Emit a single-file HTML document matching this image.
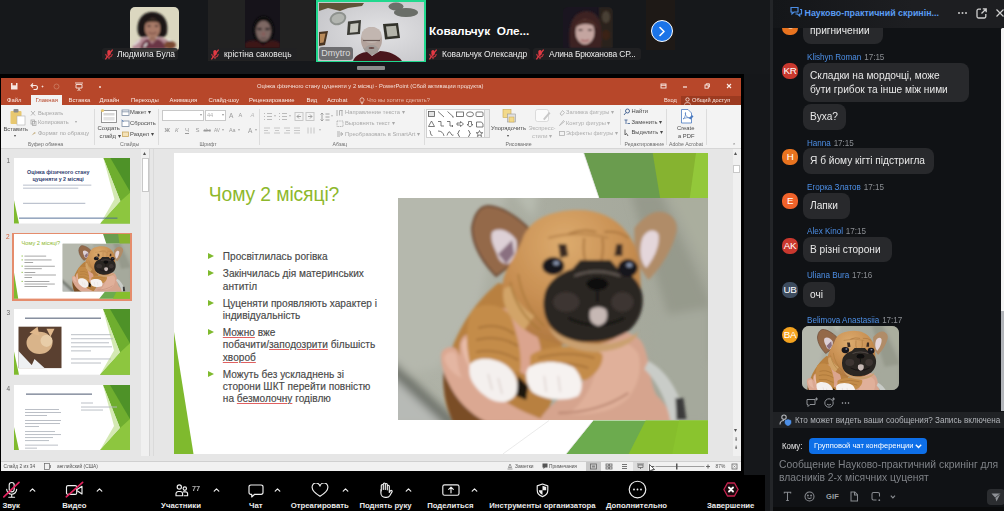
<!DOCTYPE html>
<html><head><meta charset="utf-8">
<style>
*{box-sizing:border-box;margin:0;padding:0}
html,body{width:1004px;height:511px;overflow:hidden;background:#15171a;font-family:"Liberation Sans",sans-serif;}
.a{position:absolute}
svg{display:block}
#top{left:0;top:0;width:771px;height:74px;background:#16181b}
.lbl{position:absolute;border-radius:3px;color:#ececec;white-space:nowrap;overflow:hidden}
.lbl svg{position:absolute;left:2px;top:1.5px}
#blk{left:0;top:74px;width:744px;height:437px;background:#000}
#ppt{left:1px;top:78px;width:739.5px;height:393px;background:#e6e6e6;overflow:hidden}
#bar{left:0;top:474.5px;width:765px;height:37px;background:#000}
#div{left:770px;top:0;width:3px;height:511px;background:#232528}
#chat{left:773px;top:0;width:231px;height:511px;background:#111316;overflow:hidden}
</style></head><body>
<svg width="0" height="0" style="position:absolute"><defs>
<filter id="pb" x="-5%" y="-5%" width="110%" height="110%"><feGaussianBlur stdDeviation="1.6"/></filter>
<filter id="pb2" x="-5%" y="-5%" width="110%" height="110%"><feGaussianBlur stdDeviation="4"/></filter>
<linearGradient id="pbg" x1="0" y1="0" x2="1" y2="0"><stop offset="0" stop-color="#b1b4a9"/><stop offset="0.5" stop-color="#a9aca0"/><stop offset="1" stop-color="#a3a699"/></linearGradient>
<radialGradient id="hd" cx="0.45" cy="0.25" r="0.8"><stop offset="0" stop-color="#dcab6e"/><stop offset="0.55" stop-color="#c88f52"/><stop offset="1" stop-color="#ab733c"/></radialGradient>
<g id="pup">
<rect x="-10" y="-10" width="330" height="242" fill="url(#pbg)"/>
<g filter="url(#pb2)">
<path d="M-10 -10h120l-30 120l-40 60l-60 10z" fill="#b5b8ad"/>
<path d="M232 -5l30 0l50 110v60l-40-40z" fill="#969a8c"/>
<path d="M270 -5h45v90z" fill="#aaae9e"/>
<path d="M115 -5l25 0l-5 25z" fill="#b8bcb0"/>
<path d="M-5 172l62 55h-67z" fill="#b7bab6"/>
<path d="M-5 163l66 62l-10 6l-60-56z" fill="#6c7068"/>
<path d="M250 120l60-10v115h-40z" fill="#a5a99c"/>
</g>
<g filter="url(#pb)">
<!-- body -->
<path d="M100 85c-25 20-48 55-54 95c-2 20 4 35 10 45h90l20-60l-10-70z" fill="#b8803f"/>
<path d="M46 170c-3 18 2 38 9 55h60l-30-40z" fill="#7a4e28"/>
<!-- right hand -->
<path d="M140 224c10-18 30-30 50-45l10-35c10-12 30-14 42-2c10 14 8 40 16 55c8 8 16 18 16 27z" fill="#d6a48e"/>
<path d="M200 150c14-10 32-8 40 6c4 16 0 30-10 44c-14 14-40 18-60 16c20-14 30-40 30-66z" fill="#e0b09a"/>
<path d="M160 215q40 0 70-20" stroke="#b88470" stroke-width="2" fill="none"/>
<!-- sleeve / watch -->
<path d="M250 163c16 8 32 30 38 60h-16c-4-22-14-40-26-52z" fill="#c9ccc8"/>
<path d="M277 200l8 0l3 22h-10z" fill="#3a3a3a"/>
<!-- left hand -->
<path d="M43 158c0-8 10-12 16-6l3 6c-2-14 2-22 10-22c8 0 10 8 10 18c0 16 4 30 14 40c10 10 24 18 40 24l14 6h-62c-16-8-30-22-38-40c-4-8-7-16-7-26z" fill="#dba892"/>
<path d="M64 146c2-8 12-10 15-2c2 12 0 28 6 42c-12-10-20-24-21-40z" fill="#e8bca8"/>
<path d="M46 160c2-6 8-8 12-4c2 8 2 16 6 24c-10-4-16-12-18-20z" fill="#e4b6a2"/>
<!-- thumb between legs -->
<path d="M98 112c12-6 30 4 38 20c8 14 10 32 0 44c-10 4-20-4-24-16c-8-14-16-30-14-48z" fill="#dba48e"/>
<!-- left leg -->
<path d="M74 112c14-10 36-4 40 10c6 18 10 34 8 52l-48 0c-6-20-8-44 0-62z" fill="#c48c48"/>
<path d="M80 130q20-6 36 6M78 142q22-6 42 6M78 154q22-4 42 8" stroke="#a06c34" stroke-width="1.600" fill="none"/>
<!-- right leg -->
<path d="M132 158c10-10 50-14 72-2c2 10-6 20-16 26l-56 0z" fill="#c48c48"/>
<path d="M140 160q30-8 56 0M138 168q30-6 52 2" stroke="#a06c34" stroke-width="1.500" fill="none"/>
<!-- paws -->
<path d="M120 178l10 10l-2 14l-10-4z" fill="#1a1410"/>
<path d="M72 166c8-8 24-6 34 0c10 6 16 18 12 30c-6 10-18 10-28 4c-12-8-22-20-18-34z" fill="#f4f0ee"/>
<path d="M130 170c10-8 34-8 46 0c8 8 10 20 4 28c-14 6-34 4-46-4c-6-8-8-18-4-24z" fill="#f6f2f0"/>
<path d="M90 176l4 16M100 180l4 16M146 178l2 16M160 178l2 16" stroke="#d8ccc8" stroke-width="1.200"/>
<!-- ears -->
<path d="M74 30c2-14 8-22 16-22c12 0 28 10 40 22l-8 30l-24 18c-12-12-24-30-24-48z" fill="#94694a" stroke="#6a4a36" stroke-width="2"/>
<path d="M94 34c8-6 18 0 24 8c2 10-2 20-8 24c-8 0-10-6-12-12c-4-8-6-14-4-20z" fill="#ddd0d6"/>
<path d="M100 56l14-14l2 14l-8 10z" fill="#8a7080"/>
<path d="M236 30c8-10 18-18 28-16c10 2 16 10 14 20c-4 18-16 36-28 48l-14-20z" fill="#b08c68"/>
<path d="M244 40c4-8 12-10 16-4c2 10-4 24-12 34c-6-6-8-18-4-30z" fill="#e4d6da"/>
<!-- head -->
<path d="M180 12c-28 0-50 10-56 30c-8 20-20 30-20 50c0 24 20 44 50 52c20 6 50 6 66-6c18-12 24-34 22-56c0-20-4-36-14-48c-10-14-28-22-48-22z" fill="url(#hd)"/>
<path d="M106 90c-4 14 4 30 20 42l10-14c-12-8-20-18-22-30z" fill="#d2a468"/>
<!-- wrinkles -->
<path d="M112 84q6 30 30 48M120 76q4 30 26 52" stroke="#a87838" stroke-width="1.500" fill="none"/>
<path d="M150 40q30-8 60 0" stroke="#b8844c" stroke-width="2" fill="none"/>
<path d="M186 40q-2 16 2 26M204 40q2 14-2 26M170 36q14-6 28-2M206 34q14-2 24 6" stroke="#a8743c" stroke-width="1.800" fill="none"/>
<!-- brows -->
<path d="M160 46l8 0l2 12l-8 2z" fill="#3a2a20"/><path d="M218 46l6 0l0 12l-8 0z" fill="#3a2a20"/>
<!-- muzzle -->
<path d="M146 98c2-12 12-22 28-27l8-9h30l8 9c14 4 22 14 24 26c2 14-4 28-14 36c-12 8-26 11-40 11c-16 0-30-6-38-16c-6-8-8-20-6-30z" fill="#2a2523"/>
<ellipse cx="168" cy="104" rx="13" ry="10" fill="#4c443f" opacity=".55"/><ellipse cx="224" cy="104" rx="11" ry="10" fill="#4c443f" opacity=".55"/>
<ellipse cx="199" cy="86" rx="11" ry="6.500" fill="#0c0a0a"/>
<path d="M176 78q22-9 46 0" stroke="#6a605a" stroke-width="1.800" fill="none"/>
<path d="M199 92v12M170 120q28 14 56 0" stroke="#0e0c0c" stroke-width="2" fill="none"/>
<path d="M192 112c4-4 12-4 16 0c2 8 0 14-8 16c-8-2-10-8-8-16z" fill="#c6b8b4"/>
<path d="M150 128c10 12 30 18 50 18c16 0 30-4 40-12c-4 10-16 18-40 20c-24 0-44-10-50-26z" fill="#caa070"/>
<!-- eyes -->
<ellipse cx="155" cy="68" rx="11" ry="9" fill="#15131a"/><ellipse cx="229.500" cy="70" rx="10" ry="9" fill="#15131a"/>
<ellipse cx="158" cy="65" rx="3" ry="2" fill="#8a96b0"/><ellipse cx="231" cy="67" rx="3" ry="2" fill="#8a96b0"/>
</g>
</g>
</defs></svg>

<div id="top" class="a">

<style>
.lbl{height:12.5px;line-height:12.5px;font-size:8.9px;padding-left:15.5px;background:rgba(34,34,36,.86)}
.lbl span{display:inline-block;transform:scaleX(.95);transform-origin:0 0}
</style>
<svg class="a" style="left:130px;top:6.5px;border-radius:5px" width="49" height="45" viewBox="0 0 49 45"><defs><filter id="b1"><feGaussianBlur stdDeviation="0.8"/></filter></defs>
<rect width="49" height="45" fill="#dbd7c0"/>
<g filter="url(#b1)">
<path d="M8 26c-2-12 4-21 14-21c11 0 17 8 15 21c-1 4-4 5-6 4l-17 0c-3 1-5-1-6-4z" fill="#1b1715"/>
<ellipse cx="22.500" cy="21.500" rx="7.800" ry="10" fill="#a87a68"/>
<path d="M14 17c2-6 14-7 17 0c-4-3-12-3-17 0z" fill="#2a201c"/>
<ellipse cx="19" cy="19" rx="1.800" ry="0.900" fill="#4a3430"/><ellipse cx="26.500" cy="19" rx="1.800" ry="0.900" fill="#4a3430"/>
<path d="M18.500 25.500q4 2.500 8 0" stroke="#6a3a34" stroke-width="1" fill="none"/>
<path d="M2 42c2-8 8-11 14-12l6 3l7-3c6 1 12 4 16 12z" fill="#b48a94"/>
<path d="M10 42c1-5 4-9 8-10l4 5l5-5c5 1 8 5 9 10z" fill="#6a3444"/>
<path d="M4 38l6-5M38 32l6 5M14 40l3-4" stroke="#eee" stroke-width="1.500"/>
<ellipse cx="40" cy="38" rx="6" ry="4" fill="#7a4a30"/>
<ellipse cx="22.500" cy="32" rx="3.500" ry="2.500" fill="#9a6e5e"/>
</g></svg>
<div class="lbl" style="left:101.5px;top:47.5px;width:76.5px"><svg width="10" height="11" viewBox="0 0 9 10" fill="none"><rect x="3" y="0.8" width="3" height="5.2" rx="1.5" fill="#e23a44"/><path d="M1.5 4.500a3 3 0 0 0 6 0M4.500 7.500v1.700" stroke="#e23a44" stroke-width="0.9"/><path d="M7.800 0.600l-6.600 8.800" stroke="#e23a44" stroke-width="1.1"/></svg><span>Людмила Була</span></div>
<div class="a" style="left:208px;top:0;width:107px;height:61px;background:#222222"></div>
<svg class="a" style="left:245px;top:0" width="35" height="48" viewBox="0 0 35 48"><defs><filter id="b2"><feGaussianBlur stdDeviation="1"/></filter></defs>
<rect width="35" height="48" fill="#16131a"/>
<g filter="url(#b2)">
<ellipse cx="18.500" cy="30" rx="10.500" ry="14" fill="#0c0a0e"/>
<ellipse cx="18.500" cy="31" rx="7.600" ry="10.500" fill="#7d6863"/>
<ellipse cx="14.500" cy="29" rx="2.600" ry="1.300" fill="#2c2426"/><ellipse cx="22.500" cy="29" rx="2.600" ry="1.300" fill="#2c2426"/>
<ellipse cx="18.500" cy="34" rx="1.500" ry="2" fill="#8a5a58"/>
<path d="M15.500 38.500h6" stroke="#4a3434" stroke-width="1"/>
<path d="M0 48v-5c4-3 9-3 12-2l6 4l7-4c4-1 7 0 10 2v5z" fill="#3c1218"/>
</g></svg>
<div class="lbl" style="left:208.0px;top:47.5px;width:88.5px"><svg width="10" height="11" viewBox="0 0 9 10" fill="none"><rect x="3" y="0.8" width="3" height="5.2" rx="1.5" fill="#e23a44"/><path d="M1.5 4.500a3 3 0 0 0 6 0M4.500 7.500v1.700" stroke="#e23a44" stroke-width="0.9"/><path d="M7.800 0.600l-6.600 8.800" stroke="#e23a44" stroke-width="1.1"/></svg><span>крістіна саковець</span></div>
<div class="a" style="left:316px;top:0;width:109.500px;height:62px;background:#20d88e"></div>
<svg class="a" style="left:317.500px;top:1.500px" width="106.500" height="59" viewBox="0 0 106.500 59"><defs><filter id="b3"><feGaussianBlur stdDeviation="0.700"/></filter><radialGradient id="wg" cx="0.600" cy="0.500" r="0.700"><stop offset="0" stop-color="#e2e2e4"/><stop offset="1" stop-color="#c6c6ca"/></radialGradient></defs>
<rect width="106.500" height="59" fill="url(#wg)"/>
<g filter="url(#b3)">
<path d="M1 1h45l-2 3l-14 2l-8 3l-12-3l-9 3z" fill="#5e5238"/>
<ellipse cx="20" cy="16.500" rx="8.500" ry="6.500" fill="#8e928e" transform="rotate(-18 20 16.500)"/>
<ellipse cx="20" cy="16.500" rx="6.500" ry="4.600" fill="#b2b5b0" transform="rotate(-18 20 16.500)"/>
<ellipse cx="78" cy="4.500" rx="7.500" ry="4" fill="#6c706a"/>
<ellipse cx="88" cy="10.500" rx="12" ry="4.500" fill="#6a6e68"/>
<path d="M30 19.500l13-1.500l-1 14l-13 1z" fill="#3a3a34"/><path d="M32.500 22l8-1l-0.700 9l-8 0.700z" fill="#c8c8c0"/>
<path d="M65 22l15-1l2 15l-15 1.500z" fill="#30302a"/><path d="M68 24.500l10-0.700l1.500 10l-10 1z" fill="#b4b4aa"/>
<path d="M1 30l9-1l-3 14l-6 1z" fill="#4a3420"/><path d="M2 32l5.500-0.500l-2 9l-3.500 0.500z" fill="#b88a5a"/>
<ellipse cx="53.500" cy="38" rx="10.500" ry="13" fill="#b3a39c"/>
<ellipse cx="53.500" cy="33" rx="10" ry="8" fill="#c2b6b0"/>
<path d="M45 45c2 8 14 8 17 0c-2 4-14 5-17 0z" fill="#9a9692"/>
<ellipse cx="53.500" cy="48" rx="7" ry="5" fill="#a29c98"/>
<path d="M45 38.500h17" stroke="#6a5a56" stroke-width="1.200"/>
<ellipse cx="53.500" cy="46" rx="3" ry="1" fill="#6a4a46"/>
<path d="M35 59c2-6 10-9 14-9l5 4l8-5c8 0 18 4 22 10z" fill="#48181e"/>
</g></svg>
<div class="a" style="left:319px;top:46.500px;width:33.500px;height:13px;border-radius:3px;background:rgba(96,96,98,.88);color:#dcdcdc;font-size:9px;line-height:13px;text-align:center">Dmytro</div>
<div class="a" style="left:357px;top:66px;width:28px;height:4px;border-radius:1px;background:#8c8c8c"></div>
<div class="a" style="left:429px;top:24px;font-size:11.8px;line-height:15px;font-weight:bold;color:#fff;white-space:pre">Ковальчук  Оле...</div>
<div class="lbl" style="left:426.0px;top:47.5px;width:103.5px"><svg width="10" height="11" viewBox="0 0 9 10" fill="none"><rect x="3" y="0.8" width="3" height="5.2" rx="1.5" fill="#e23a44"/><path d="M1.5 4.500a3 3 0 0 0 6 0M4.500 7.500v1.700" stroke="#e23a44" stroke-width="0.9"/><path d="M7.800 0.600l-6.600 8.800" stroke="#e23a44" stroke-width="1.1"/></svg><span>Ковальчук Олександр</span></div>
<svg class="a" style="left:563px;top:7px;border-radius:5px" width="49.500" height="44" viewBox="0 0 49.500 44"><defs><filter id="b4"><feGaussianBlur stdDeviation="0.900"/></filter></defs>
<rect width="49.500" height="44" fill="#1a1520"/>
<g filter="url(#b4)">
<rect x="36" y="0" width="14" height="41" fill="#2a221c"/>
<ellipse cx="43" cy="10" rx="4" ry="6" fill="#4a4034"/><ellipse cx="43" cy="28" rx="4" ry="5" fill="#3a2018"/>
<path d="M7 41c-2-16-1-36 16-37c15 0 17 18 15 37z" fill="#3e2424"/>
<ellipse cx="22" cy="25" rx="9.500" ry="12.500" fill="#c4a5a0"/>
<path d="M11 22c0-12 22-14 24 0c-6-6-18-7-24 0z" fill="#4a2a26"/>
<ellipse cx="17.500" cy="23" rx="2.300" ry="1.100" fill="#4a3838"/><ellipse cx="27" cy="23" rx="2.300" ry="1.100" fill="#4a3838"/>
<path d="M18 33q4 2 8 0" stroke="#a05a5e" stroke-width="1.600" fill="none"/>
</g></svg>
<div class="lbl" style="left:533.0px;top:47.5px;width:107.5px"><svg width="10" height="11" viewBox="0 0 9 10" fill="none"><rect x="3" y="0.8" width="3" height="5.2" rx="1.5" fill="#e23a44"/><path d="M1.5 4.500a3 3 0 0 0 6 0M4.500 7.500v1.700" stroke="#e23a44" stroke-width="0.9"/><path d="M7.800 0.600l-6.600 8.800" stroke="#e23a44" stroke-width="1.1"/></svg><span style="letter-spacing:-0.18px">Алина Брюханова СР...</span></div>
<div class="a" style="left:645.5px;top:0;width:29px;height:50px;background:#1e1916"></div>
<div class="a" style="left:650.5px;top:20px;width:22px;height:22px;border-radius:11px;background:#1b74e8;border:1.300px solid #fff"></div>
<svg class="a" style="left:657.500px;top:25.500px" width="8" height="11" viewBox="0 0 8 11" fill="none" stroke="#fff" stroke-width="1.6" stroke-linecap="round" stroke-linejoin="round"><path d="M2 1.500l4 4l-4 4"/></svg>

</div>
<div id="blk" class="a"></div>
<div id="bar" class="a">
<style>#bar .l{position:absolute;top:26.900px;font-size:7.750px;font-weight:bold;color:#ebebeb;line-height:10px;white-space:nowrap;transform:translateX(-50%)}#bar svg{position:absolute;fill:none;stroke:#f0f0f0;stroke-width:1.150;stroke-linecap:round;stroke-linejoin:round}</style>
<div class="l" style="left:11.2px">Звук</div>
<div class="l" style="left:74.3px">Видео</div>
<div class="l" style="left:181px">Участники</div>
<div class="l" style="left:255.8px">Чат</div>
<div class="l" style="left:319.8px">Отреагировать</div>
<div class="l" style="left:385.5px">Поднять руку</div>
<div class="l" style="left:450.4px">Поделиться</div>
<div class="l" style="left:542.4px">Инструменты организатора</div>
<div class="l" style="left:636.5px">Дополнительно</div>
<div class="l" style="left:730.7px">Завершение</div>
<svg style="left:28.9px;top:13.0px" width="7" height="4" viewBox="0 0 7 4"><path d="M1.200 3.200l2.300-2.300l2.300 2.300" stroke-width="1.150"/></svg>
<svg style="left:95.6px;top:13.0px" width="7" height="4" viewBox="0 0 7 4"><path d="M1.200 3.200l2.300-2.300l2.300 2.300" stroke-width="1.150"/></svg>
<svg style="left:212.8px;top:13.0px" width="7" height="4" viewBox="0 0 7 4"><path d="M1.200 3.200l2.300-2.300l2.300 2.300" stroke-width="1.150"/></svg>
<svg style="left:273.8px;top:13.0px" width="7" height="4" viewBox="0 0 7 4"><path d="M1.200 3.200l2.300-2.300l2.300 2.300" stroke-width="1.150"/></svg>
<svg style="left:341.5px;top:13.0px" width="7" height="4" viewBox="0 0 7 4"><path d="M1.200 3.200l2.300-2.300l2.300 2.300" stroke-width="1.150"/></svg>
<svg style="left:404.9px;top:13.0px" width="7" height="4" viewBox="0 0 7 4"><path d="M1.200 3.200l2.300-2.300l2.300 2.300" stroke-width="1.150"/></svg>
<svg style="left:471.4px;top:13.0px" width="7" height="4" viewBox="0 0 7 4"><path d="M1.200 3.200l2.300-2.300l2.300 2.300" stroke-width="1.150"/></svg>
<svg style="left:3px;top:6.5px" width="17" height="17" viewBox="0 0 17 17"><rect x="6.200" y="1.500" width="5" height="9.300" rx="2.500"/><path d="M3.700 8.200a5 5 0 0 0 10 0M8.700 13.300v2.800M5.800 16.200h5.800"/><path d="M0.800 15.800l15.200-14.500" stroke="#e3245f" stroke-width="1.700"/></svg>
<svg style="left:65px;top:6.5px" width="19" height="17" viewBox="0 0 19 17"><rect x="1.500" y="4.600" width="10.200" height="8.800" rx="1.500"/><path d="M12.500 8.300l4.500-3v7.600l-4.500-3"/><path d="M1.300 15.800l16.300-14.500" stroke="#e3245f" stroke-width="1.700"/></svg>
<svg style="left:174.500px;top:9.5px" width="14" height="13" viewBox="0 0 14 13"><circle cx="4.300" cy="3" r="2.100"/><path d="M1 11.700v-2a2.200 2.200 0 0 1 2.200-2.200h2.200a2.200 2.200 0 0 1 2.200 2.200v2z"/><circle cx="9.800" cy="4.600" r="1.700"/><path d="M8.300 7.800h2.300a2 2 0 0 1 2 2v1.900h-3.500"/></svg>
<div style="position:absolute;left:192.300px;top:9.5px;font-size:8px;line-height:10px;color:#b4b4b4;font-weight:bold;transform:scaleX(.92);transform-origin:0 0">77</div>
<svg style="left:247.500px;top:9.0px" width="16" height="14" viewBox="0 0 16 14"><path d="M2.800 1h10.400a1.800 1.800 0 0 1 1.800 1.800v5.700a1.800 1.800 0 0 1-1.800 1.800h-6.500l-3 2.700v-2.700h-0.900a1.800 1.800 0 0 1-1.800-1.800v-5.700a1.800 1.800 0 0 1 1.800-1.800z"/></svg>
<svg style="left:311px;top:8.5px" width="18" height="14.500" viewBox="0 0 18 14.500"><path d="M9 13.300c-4-2.600-7.800-5.600-7.800-8.600a3.700 3.700 0 0 1 7.800-1.500a3.700 3.700 0 0 1 7.800 1.500c0 3-3.800 6-7.800 8.600z"/></svg>
<svg style="left:377.500px;top:7.5px" width="15" height="16" viewBox="0 0 15 16"><path d="M3.300 9v-5.500a1 1 0 0 1 2 0v4M5.300 7.500v-5.500a1 1 0 0 1 2 0v5.500M7.300 7.500v-5a1 1 0 0 1 2 0v5M9.300 7.800v-3.600a1 1 0 0 1 2 0v6.200l1.200-1.800a1 1 0 0 1 1.600 1l-2.200 3.900a4 4 0 0 1-3.500 1.900h-1.200a4.300 4.300 0 0 1-4.300-4.300v-3.500"/></svg>
<svg style="left:441.500px;top:9.5px" width="18" height="12" viewBox="0 0 18 12"><rect x="0.800" y="0.800" width="16.200" height="10.400" rx="1.800"/><path d="M9 8.800v-5.300M6.700 5.400l2.300-2.300l2.300 2.300"/></svg>
<svg style="left:535.500px;top:8.5px" width="13" height="14.500" viewBox="0 0 13 14.500"><path d="M6.500 1l5.300 1.900v4.300c0 3-2.300 5.300-5.300 6.400c-3-1.100-5.300-3.400-5.300-6.400v-4.300z"/><path d="M6.500 2.800v4.500h3.700v-3.200zM6.500 7.300v4.600c-2-0.900-3.500-2.400-3.700-4.600z" fill="#f0f0f0" stroke="none"/></svg>
<svg style="left:627.500px;top:5.699999999999989px" width="19" height="19" viewBox="0 0 19 19"><circle cx="9.500" cy="9.500" r="8.300"/><circle cx="6" cy="9.500" r="0.900" fill="#f0f0f0" stroke="none"/><circle cx="9.500" cy="9.500" r="0.900" fill="#f0f0f0" stroke="none"/><circle cx="13" cy="9.500" r="0.900" fill="#f0f0f0" stroke="none"/></svg>
<svg style="left:722.500px;top:7.699999999999989px" width="16" height="15" viewBox="0 0 16 15"><path d="M4.500 1h7l3.600 6.500l-3.600 6.500h-7l-3.600-6.500z" stroke="#c8224f" stroke-width="1.300" fill="#1a0a0e"/><path d="M6 5.500l4 4M10 5.500l-4 4" stroke="#fff" stroke-width="1.900"/></svg>
</div>
<div id="ppt" class="a">
<style>
#ppt .t{white-space:nowrap}
#ppt .bl{filter:blur(.35px)}
</style>
<div class="a" style="left:0.00px;top:0.00px;width:740.00px;height:28.00px;background:#b7472a"></div>
<svg class="a bl" style="left:9px;top:3px" width="100" height="11" viewBox="0 0 100 11" fill="none" stroke="#f6e6e0" stroke-width="1"><rect x="1" y="2" width="6.5" height="6.500" fill="#f6e6e0" stroke="none"/><rect x="2.500" y="2" width="3.500" height="2.300" fill="#b7472a" stroke="none"/><path d="M21 4.500h4.500a2 2 0 0 1 0 4h-2M23 2.500l-2 2l2 2" stroke-width="1.100"/><circle cx="32.500" cy="5.500" r="0.500" fill="#f6e6e0"/><circle cx="46.500" cy="5.500" r="2.500" stroke="#c9765c"/><path d="M65 2h8M66 3.500h6v3.500h-6zM69 7v2M67.500 10l1.500-1.500l1.500 1.500" stroke-width="0.900"/><circle cx="90" cy="6" r="0.600" fill="#f6e6e0"/></svg>
<div class="a t bl" style="left:256.00px;top:4.70px;font-size:6.0px;line-height:7.20px;color:#f5e3dc;transform:scaleX(.97);transform-origin:0 0">Оцінка фізичного стану цуценяти у 2 місяці - PowerPoint (Сбой активации продукта)</div>
<svg class="a bl" style="left:659px;top:3px" width="76" height="10" viewBox="0 0 76 10" fill="none" stroke="#fbeee9" stroke-width="0.900"><rect x="1" y="3" width="5" height="4"/><path d="M1 4.300h5"/><path d="M23 6h4" stroke-width="1.200"/><rect x="45" y="4" width="3.200" height="3.200"/><path d="M46.200 4v-1.200h3.200v3.200h-1.200"/><path d="M67 3l4 4M71 3l-4 4" stroke-width="1.100"/></svg>
<div class="a" style="left:29.50px;top:16.80px;width:31.50px;height:11.00px;background:#f3f3f3"></div>
<div class="a t bl" style="left:34.50px;top:19.06px;font-size:5.9px;line-height:7.08px;color:#b7472a;">Главная</div>
<div class="a t bl" style="left:6.00px;top:19.06px;font-size:5.9px;line-height:7.08px;color:#fbeae4;">Файл</div>
<div class="a t bl" style="left:67.50px;top:19.06px;font-size:5.9px;line-height:7.08px;color:#fbeae4;">Вставка</div>
<div class="a t bl" style="left:98.50px;top:19.06px;font-size:5.9px;line-height:7.08px;color:#fbeae4;">Дизайн</div>
<div class="a t bl" style="left:130.00px;top:19.06px;font-size:5.9px;line-height:7.08px;color:#fbeae4;">Переходы</div>
<div class="a t bl" style="left:168.50px;top:19.06px;font-size:5.9px;line-height:7.08px;color:#fbeae4;">Анимация</div>
<div class="a t bl" style="left:207.50px;top:19.06px;font-size:5.9px;line-height:7.08px;color:#fbeae4;">Слайд-шоу</div>
<div class="a t bl" style="left:248.00px;top:19.06px;font-size:5.9px;line-height:7.08px;color:#fbeae4;">Рецензирование</div>
<div class="a t bl" style="left:305.50px;top:19.06px;font-size:5.9px;line-height:7.08px;color:#fbeae4;">Вид</div>
<div class="a t bl" style="left:326.00px;top:19.06px;font-size:5.9px;line-height:7.08px;color:#fbeae4;">Acrobat</div>
<svg class="a" style="left:358px;top:18.5px" width="6" height="8" viewBox="0 0 6 8" fill="none" stroke="#f3d5cb" stroke-width="0.800"><path d="M3 0.800a2 2 0 0 1 1.200 3.600v1h-2.400v-1a2 2 0 0 1 1.200-3.600zM2 6.700h2"/></svg>
<div class="a t bl" style="left:366.00px;top:19.18px;font-size:5.7px;line-height:6.84px;color:#e9b9a9;">Что вы хотите сделать?</div>
<div class="a t bl" style="left:663.00px;top:19.18px;font-size:5.7px;line-height:6.84px;color:#fbeae4;">Вход</div>
<div class="a" style="left:680.00px;top:17.50px;width:60.00px;height:10.50px;background:#9c3a20"></div>
<svg class="a" style="left:683px;top:19px" width="7" height="8" viewBox="0 0 7 8" fill="none" stroke="#fbeae4" stroke-width="0.800"><circle cx="3.500" cy="2.500" r="1.700"/><path d="M0.500 7.500c0-2.500 6-2.500 6 0"/></svg>
<div class="a t bl" style="left:691.00px;top:19.18px;font-size:5.7px;line-height:6.84px;color:#fbeae4;">Общий доступ</div>
<div class="a" style="left:0.00px;top:27.40px;width:740.00px;height:42.60px;background:#f3f3f3"></div>
<div class="a" style="left:0.00px;top:69.50px;width:740.00px;height:0.80px;background:#d6d6d6"></div>
<div class="a" style="left:93.00px;top:31.00px;width:0.60px;height:36.00px;background:#dcdcdc"></div>
<div class="a" style="left:157.00px;top:31.00px;width:0.60px;height:36.00px;background:#dcdcdc"></div>
<div class="a" style="left:258.00px;top:31.00px;width:0.60px;height:36.00px;background:#dcdcdc"></div>
<div class="a" style="left:423.00px;top:31.00px;width:0.60px;height:36.00px;background:#dcdcdc"></div>
<div class="a" style="left:619.00px;top:31.00px;width:0.60px;height:36.00px;background:#dcdcdc"></div>
<div class="a" style="left:665.00px;top:31.00px;width:0.60px;height:36.00px;background:#dcdcdc"></div>
<div class="a" style="left:705.00px;top:31.00px;width:0.60px;height:36.00px;background:#dcdcdc"></div>
<div class="a t bl" style="left:27.00px;top:63.48px;font-size:5.2px;line-height:6.24px;color:#6e6e6e;">Буфер обмена</div>
<div class="a t bl" style="left:119.00px;top:63.48px;font-size:5.2px;line-height:6.24px;color:#6e6e6e;">Слайды</div>
<div class="a t bl" style="left:198.50px;top:63.48px;font-size:5.2px;line-height:6.24px;color:#6e6e6e;">Шрифт</div>
<div class="a t bl" style="left:331.50px;top:63.48px;font-size:5.2px;line-height:6.24px;color:#6e6e6e;">Абзац</div>
<div class="a t bl" style="left:504.50px;top:63.48px;font-size:5.2px;line-height:6.24px;color:#6e6e6e;">Рисование</div>
<div class="a t bl" style="left:623.50px;top:63.48px;font-size:5.2px;line-height:6.24px;color:#6e6e6e;">Редактирование</div>
<div class="a t bl" style="left:668.00px;top:63.48px;font-size:5.2px;line-height:6.24px;color:#6e6e6e;">Adobe Acrobat</div>
<svg class="a bl" style="left:8px;top:29.5px" width="18" height="18" viewBox="0 0 18 18"><rect x="1.500" y="3" width="11" height="13" rx="1" fill="#e8c870"/><rect x="4.500" y="1" width="5" height="3.500" rx="1" fill="#8a8a8a"/><rect x="8" y="8" width="8" height="9" fill="#fff" stroke="#b0b0b0" stroke-width="0.600"/></svg>
<div class="a t bl" style="left:2.50px;top:47.52px;font-size:5.8px;line-height:6.96px;color:#4a4a4a;">Вставить</div>
<div class="a t bl" style="left:12.50px;top:55.60px;font-size:4px;line-height:4.80px;color:#4a4a4a;">▾</div>
<div class="a t bl" style="left:37.00px;top:31.58px;font-size:5.7px;line-height:6.84px;color:#a6a6a6;">Вырезать</div>
<div class="a t bl" style="left:37.00px;top:41.08px;font-size:5.7px;line-height:6.84px;color:#a6a6a6;">Копировать</div>
<div class="a t bl" style="left:37.00px;top:51.58px;font-size:5.7px;line-height:6.84px;color:#a6a6a6;">Формат по образцу</div>
<svg class="a bl" style="left:29px;top:32px" width="7" height="27" viewBox="0 0 7 27" fill="none" stroke="#a8a8a8" stroke-width="0.800"><path d="M1 1l4 4.500M5 1l-4 4.500"/><rect x="1" y="10" width="3.500" height="4"/><rect x="2.500" y="11.500" width="3.500" height="4"/><path d="M1.500 25.500l3-3.500l1.500 1z" fill="#c9b48a" stroke="none"/></svg>
<div class="a t bl" style="left:74.00px;top:42.10px;font-size:4px;line-height:4.80px;color:#a6a6a6;">▾</div>
<svg class="a bl" style="left:99px;top:29.5px" width="18" height="17" viewBox="0 0 18 17"><rect x="1.500" y="2.500" width="15" height="12" fill="#fff" stroke="#8a8a8a" stroke-width="0.900"/><rect x="3.500" y="5" width="11" height="2.500" fill="#d8d8d8"/><rect x="3.500" y="9" width="11" height="3.500" fill="#e4e4e4"/><circle cx="2.500" cy="2.500" r="1.600" fill="#e8c870"/></svg>
<div class="a t bl" style="left:96.50px;top:46.96px;font-size:5.9px;line-height:7.08px;color:#4a4a4a;">Создать</div>
<div class="a t bl" style="left:98.50px;top:54.96px;font-size:5.9px;line-height:7.08px;color:#4a4a4a;">слайд ▾</div>
<div class="a t bl" style="left:129.00px;top:31.02px;font-size:5.8px;line-height:6.96px;color:#4a4a4a;">Макет ▾</div>
<div class="a t bl" style="left:129.00px;top:42.02px;font-size:5.8px;line-height:6.96px;color:#4a4a4a;">Сбросить</div>
<div class="a t bl" style="left:129.00px;top:52.52px;font-size:5.8px;line-height:6.96px;color:#4a4a4a;">Раздел ▾</div>
<svg class="a bl" style="left:120px;top:31px" width="9" height="29" viewBox="0 0 9 29" fill="none" stroke="#7a8aa0" stroke-width="0.800"><rect x="1" y="1" width="7" height="5.500" fill="#fff"/><path d="M1 2.800h7"/><rect x="1" y="12" width="7" height="5.500" fill="#fff"/><path d="M0.500 11l2 1.500" stroke="#3a6ab0"/><rect x="1.500" y="23" width="6" height="4.500" fill="#f4e2b8" stroke="#c9a860"/></svg>
<div class="a" style="left:161.00px;top:32.00px;width:42.00px;height:10.50px;background:#fff;border:0.600px solid #c8c8c8"></div>
<div class="a" style="left:204.00px;top:32.00px;width:21.00px;height:10.50px;background:#fff;border:0.600px solid #c8c8c8"></div>
<div class="a t bl" style="left:206.00px;top:33.94px;font-size:5.6px;line-height:6.72px;color:#b0b0b0;">44</div>
<div class="a t bl" style="left:198.50px;top:35.02px;font-size:3.8px;line-height:4.56px;color:#999;">▾</div>
<div class="a t bl" style="left:220.50px;top:35.02px;font-size:3.8px;line-height:4.56px;color:#999;">▾</div>
<div class="a t bl" style="left:228.00px;top:33.60px;font-size:6.5px;line-height:7.80px;color:#9a9a9a;">A</div>
<div class="a t bl" style="left:237.50px;top:34.34px;font-size:5.6px;line-height:6.72px;color:#9a9a9a;">A</div>
<div class="a t bl" style="left:249.50px;top:33.90px;font-size:6px;line-height:7.20px;color:#b8b8b8;font-style:italic">A</div>
<div class="a t bl" style="left:163.50px;top:48.90px;font-size:6px;line-height:7.20px;color:#9a9a9a;font-weight:bold">Ж</div>
<div class="a t bl" style="left:174.00px;top:48.90px;font-size:6px;line-height:7.20px;color:#9a9a9a;font-style:italic">К</div>
<div class="a t bl" style="left:184.00px;top:48.90px;font-size:6px;line-height:7.20px;color:#9a9a9a;text-decoration:underline">Ч</div>
<div class="a t bl" style="left:194.50px;top:48.90px;font-size:6px;line-height:7.20px;color:#9a9a9a;">S</div>
<div class="a t bl" style="left:202.50px;top:48.90px;font-size:6px;line-height:7.20px;color:#9a9a9a;font-size:4.500px;text-decoration:line-through">abc</div>
<div class="a t bl" style="left:213.00px;top:48.90px;font-size:6px;line-height:7.20px;color:#9a9a9a;font-size:4.700px">AV</div>
<div class="a t bl" style="left:228.00px;top:48.90px;font-size:6px;line-height:7.20px;color:#9a9a9a;font-size:5.400px">Aa</div>
<div class="a t bl" style="left:247.00px;top:48.90px;font-size:6px;line-height:7.20px;color:#9a9a9a;font-size:6.500px">A</div>
<div class="a t bl" style="left:220.50px;top:50.22px;font-size:3.8px;line-height:4.56px;color:#aaa;">▾</div>
<div class="a t bl" style="left:236.50px;top:50.22px;font-size:3.8px;line-height:4.56px;color:#aaa;">▾</div>
<div class="a t bl" style="left:254.00px;top:50.22px;font-size:3.8px;line-height:4.56px;color:#aaa;">▾</div>
<svg class="a bl" style="left:261px;top:32px" width="72" height="28" viewBox="0 0 72 28" fill="none" stroke="#b4b4b4" stroke-width="0.900"><path d="M2 3.500h1M2 6.500h1M2 9.500h1M5 3.500h5M5 6.500h5M5 9.500h5"/><path d="M17 3.500h1M17 6.500h1M17 9.500h1M20 3.500h5M20 6.500h5M20 9.500h5"/><rect x="33" y="2.500" width="8" height="8" stroke="#c4c4c4"/><path d="M35 6.500h4M37 4.500l-2 2l2 2" stroke="#9a9a9a"/><rect x="44" y="2.500" width="8" height="8" stroke="#c4c4c4"/><path d="M46 6.500h4M48 4.500l2 2l-2 2" stroke="#9a9a9a"/><path d="M60 3v8M58.500 4.500l1.500-1.500l1.500 1.500M58.500 9.500l1.500 1.500l1.500-1.500M63.500 4h4M63.500 7h4M63.500 10h4" stroke="#9a9a9a"/><path d="M2 18h6M2 20.500h4M2 23h6M12 18h6M13 20.500h4M12 23h6M22 18h6M24 20.500h4M22 23h6M32 18h6M32 20.500h6M32 23h6" stroke="#c2c2c2"/><path d="M46 17.500v6M49 17.500v6M52 17.500v6" stroke="#c2c2c2"/></svg>
<div class="a t bl" style="left:273.00px;top:36.22px;font-size:3.8px;line-height:4.56px;color:#bbb;">▾</div>
<div class="a t bl" style="left:288.00px;top:36.22px;font-size:3.8px;line-height:4.56px;color:#bbb;">▾</div>
<div class="a t bl" style="left:330.00px;top:36.22px;font-size:3.8px;line-height:4.56px;color:#bbb;">▾</div>
<div class="a t bl" style="left:318.00px;top:50.22px;font-size:3.8px;line-height:4.56px;color:#bbb;">▾</div>
<div class="a t bl" style="left:344.00px;top:30.52px;font-size:5.8px;line-height:6.96px;color:#a8a8a8;">Направление текста ▾</div>
<div class="a t bl" style="left:344.00px;top:41.52px;font-size:5.8px;line-height:6.96px;color:#a8a8a8;">Выровнять текст ▾</div>
<div class="a t bl" style="left:344.00px;top:52.52px;font-size:5.8px;line-height:6.96px;color:#a8a8a8;">Преобразовать в SmartArt ▾</div>
<svg class="a bl" style="left:335px;top:30.5px" width="8" height="29" viewBox="0 0 8 29" fill="none" stroke="#a0a0a0" stroke-width="0.800"><path d="M1 1v6M3.500 1.500v5M6 1v6M3.500 1.500h3"/><rect x="1" y="12" width="6" height="5.500" stroke-dasharray="1 0.700"/><path d="M1 23h3M1 25h3M1 27h3M5 23.500l2 1.500l-2 1.500z"/></svg>
<div class="a" style="left:425.00px;top:31.00px;width:63.50px;height:28.50px;background:#fff;border:0.600px solid #cfcfcf"></div>
<div class="a" style="left:483.00px;top:31.00px;width:5.50px;height:28.50px;background:#ececec;border:0.600px solid #cfcfcf"></div>
<svg class="a bl" style="left:426px;top:31.5px" width="57" height="28" viewBox="0 0 57 28" fill="none" stroke="#5a5a5a" stroke-width="0.800"><rect x="1.500" y="1.500" width="6" height="5" fill="#e4e4e4"/><path d="M11 1.500l6 5.500M20.500 1.500l6 5.500M26.500 7l-1.500-0.300"/><rect x="29.500" y="2" width="7" height="4.500"/><ellipse cx="43" cy="4.300" rx="3.500" ry="2.400"/><rect x="49" y="2" width="7" height="4.500" rx="1"/><path d="M1.500 16.500l3-5.500l3 5.500z"/><path d="M11 11.500h3v4.500h3M20 11.500h3v4.500h3M26 16l-1-1M26 16l-1 1"/><path d="M30 13h3.500v-1.500l3 2.500l-3 2.500v-1.500h-3.500z"/><path d="M41.500 11.500v3h-1.500l3 2.500l3-2.500h-1.500v-3z"/><path d="M49.500 12h5l1.500 2v3h-6.500z"/><path d="M2.500 20.500q1 0 1 2.500t2 2.500M11 21q5 0 6 5M20 25.500q2-6 3.500-2.500t3 2M33 20.500q-1.500 0-1.500 1.500t-1 1.500q1 0 1 1.500t1.500 1.500M41 20.500q1.500 0 1.500 1.500t1 1.500q-1 0-1 1.500t-1.500 1.500"/><path d="M52.500 20.500l1 2.200h2.300l-1.900 1.500l0.700 2.300l-2.100-1.400l-2.100 1.400l0.700-2.300l-1.900-1.500h2.300z"/></svg>
<svg class="a bl" style="left:500px;top:29.5px" width="17" height="17" viewBox="0 0 17 17"><rect x="2" y="1.500" width="8" height="8" fill="#f2d98a" stroke="#c9a850" stroke-width="0.600"/><rect x="6.500" y="6" width="8" height="8" fill="#e0e0e0" stroke="#9a9a9a" stroke-width="0.600"/><rect x="8" y="9" width="5" height="5" fill="#f2d98a" stroke="#c9a850" stroke-width="0.500"/></svg>
<div class="a t bl" style="left:490.00px;top:46.96px;font-size:5.9px;line-height:7.08px;color:#4a4a4a;">Упорядочить</div>
<div class="a t bl" style="left:506.00px;top:55.60px;font-size:4px;line-height:4.80px;color:#4a4a4a;">▾</div>
<svg class="a bl" style="left:533px;top:29.5px" width="19" height="17" viewBox="0 0 19 17"><rect x="1.500" y="1.500" width="13" height="12" rx="2" fill="#fafafa" stroke="#cfcfcf" stroke-width="0.700"/><path d="M9 11l6-7l1.500 1.200l-6 7z" fill="#c8c8c8"/></svg>
<div class="a t bl" style="left:527.50px;top:47.02px;font-size:5.8px;line-height:6.96px;color:#b0b0b0;">Экспресс-</div>
<div class="a t bl" style="left:531.00px;top:55.02px;font-size:5.8px;line-height:6.96px;color:#b0b0b0;">стили ▾</div>
<div class="a t bl" style="left:565.00px;top:30.58px;font-size:5.7px;line-height:6.84px;color:#adadad;">Заливка фигуры ▾</div>
<div class="a t bl" style="left:565.00px;top:41.58px;font-size:5.7px;line-height:6.84px;color:#adadad;">Контур фигуры ▾</div>
<div class="a t bl" style="left:565.00px;top:52.08px;font-size:5.7px;line-height:6.84px;color:#adadad;">Эффекты фигуры ▾</div>
<svg class="a bl" style="left:557px;top:30.5px" width="8" height="29" viewBox="0 0 8 29" fill="none" stroke="#b0b0b0" stroke-width="0.800"><path d="M2 5l2.500-3.500l2 2l-2.500 3z"/><path d="M1.500 16.500l4-5l1 1z"/><rect x="1.500" y="22.500" width="5" height="4"/></svg>
<div class="a t bl" style="left:630.50px;top:30.12px;font-size:5.8px;line-height:6.96px;color:#4a4a4a;">Найти</div>
<div class="a t bl" style="left:630.50px;top:40.52px;font-size:5.8px;line-height:6.96px;color:#4a4a4a;">Заменить  ▾</div>
<div class="a t bl" style="left:630.50px;top:50.52px;font-size:5.8px;line-height:6.96px;color:#4a4a4a;">Выделить ▾</div>
<svg class="a bl" style="left:622px;top:30px" width="8" height="29" viewBox="0 0 8 29" fill="none" stroke="#3a5a8a" stroke-width="0.900"><circle cx="4.500" cy="3" r="2"/><path d="M3 4.500l-2 2.500"/><path d="M1.500 12h3M3 12v4M4.500 15.500h2.500" stroke="#4a6a9a"/><path d="M2 21.500v5.500l1.500-1.500l1.500 2.500" stroke="#555"/></svg>
<svg class="a bl" style="left:678px;top:29.5px" width="15" height="17" viewBox="0 0 15 17" fill="none"><path d="M2.500 1.500h6.500l3.500 3.500v10h-10z" fill="#fff" stroke="#4a7ac0" stroke-width="0.800"/><path d="M4 11c2-1 3-5 2.500-6.500c-1 2 2 6 4.500 5.500c-2-1-5 0-7 1z" stroke="#4a7ac0" stroke-width="0.700"/><path d="M10 10l3-3l1.500 1.500l-3 3z" fill="#4a7ac0"/></svg>
<div class="a t bl" style="left:676.00px;top:47.02px;font-size:5.8px;line-height:6.96px;color:#4a4a4a;">Create</div>
<div class="a t bl" style="left:677.00px;top:55.02px;font-size:5.8px;line-height:6.96px;color:#4a4a4a;">a PDF</div>
<div class="a t bl" style="left:730.50px;top:63.50px;font-size:5px;line-height:6.00px;color:#666;">⌃</div><div class="a" style="left:140.00px;top:70.50px;width:8.00px;height:313.00px;background:#f0f0f0"></div>
<div class="a" style="left:140.50px;top:79.50px;width:7.00px;height:34.50px;background:#fff;border:0.600px solid #c8c8c8"></div>
<div class="a t bl" style="left:141.80px;top:72.20px;font-size:5.5px;line-height:6.60px;color:#555;">▴</div>
<div class="a t bl" style="left:141.80px;top:376.20px;font-size:5.5px;line-height:6.60px;color:#555;">▾</div>
<div class="a" style="left:148.00px;top:70.50px;width:0.80px;height:313.00px;background:#d4d4d4"></div>
<div class="a" style="left:152.00px;top:70.50px;width:0.80px;height:313.00px;background:#dadada"></div>
<svg class="a" style="left:12.50px;top:80.00px" width="116.50" height="65.50" viewBox="0 0 116 65" preserveAspectRatio="none"><rect width="116" height="65" fill="#fff"/>
<path d="M89 0h27v65h-30l20-22z" fill="#6fae2f"/><path d="M96 0h20v34z" fill="#4e9228"/><path d="M106 43l10-9v31h-30z" fill="#8dc63f"/><path d="M89 0l17 43l-20 22l14-24z" fill="#c9e3a0" opacity=".8"/>
<path d="M0 42l5 23h-5z" fill="#7fba2e"/><text x="44" y="16" font-size="5.300" font-weight="bold" fill="#2f4170" text-anchor="middle" font-family="Liberation Sans">Оцінка фізичного стану</text><text x="44" y="23" font-size="5.300" font-weight="bold" fill="#2f4170" text-anchor="middle" font-family="Liberation Sans">цуценяти у 2 місяці</text><rect x="9" y="26.500" width="68" height="0.800" fill="#a8afbf"/><rect x="9" y="29.500" width="55" height="0.800" fill="#a8afbf"/><rect x="9" y="44.500" width="62" height="0.800" fill="#9aa3b5"/><rect x="5" y="59.200" width="98" height="0.900" fill="#4a6590"/></svg>
<div class="a t bl" style="left:5.50px;top:79.10px;font-size:6.5px;line-height:7.80px;color:#666;">1</div>
<div class="a" style="left:11.30px;top:154.70px;width:119.40px;height:68.00px;background:#e58c6c"></div>
<div class="a t bl" style="left:5.00px;top:154.60px;font-size:6.5px;line-height:7.80px;color:#d4603a;">2</div>
<svg class="a" style="left:13px;top:156.4px" width="116" height="64.600" viewBox="0 0 534 300.5" preserveAspectRatio="none"><defs><filter id="tb"><feGaussianBlur stdDeviation="3"/></filter></defs><rect width="534" height="300.5" fill="#fff"/>
<path d="M410 0h124v45h-109z" fill="#6a9c4e"/><path d="M479 0h55v45h-48z" fill="#86b330"/>
<path d="M419 268h115v33h-142z" fill="#6cab4e"/><path d="M472 268h62v33h-79z" fill="#86be2c"/>
<path d="M0 179l19.500 122h-19.500z" fill="#7fba2e"/>
<text x="35" y="49" font-size="26" fill="#8db82c" font-family="Liberation Sans">Чому 2 місяці?</text>
<g fill="#8a8a8a"><rect x="48" y="101" width="100" height="3.500"/><rect x="48" y="119" width="125" height="3.500"/><rect x="48" y="131" width="40" height="3.500"/><rect x="48" y="148" width="140" height="3.500"/><rect x="48" y="160" width="80" height="3.500"/><rect x="48" y="177" width="50" height="3.500"/><rect x="48" y="189" width="145" height="3.500"/><rect x="48" y="201" width="35" height="3.500"/><rect x="48" y="219" width="115" height="3.500"/><rect x="48" y="231" width="140" height="3.500"/><rect x="48" y="243" width="105" height="3.500"/></g>
<g fill="#7fba2e"><rect x="35" y="100" width="5" height="5"/><rect x="35" y="118" width="5" height="5"/><rect x="35" y="147" width="5" height="5"/><rect x="35" y="176" width="5" height="5"/><rect x="35" y="218" width="5" height="5"/></g>
<svg x="224" y="45.500" width="310" height="222" viewBox="0 0 310 222"><use href="#pup"/></svg>
</svg>
<svg class="a" style="left:13.00px;top:231.00px" width="116.00" height="65.70" viewBox="0 0 116 65" preserveAspectRatio="none"><rect width="116" height="65" fill="#fff"/>
<path d="M89 0h27v65h-30l20-22z" fill="#6fae2f"/><path d="M96 0h20v34z" fill="#4e9228"/><path d="M106 43l10-9v31h-30z" fill="#8dc63f"/><path d="M89 0l17 43l-20 22l14-24z" fill="#c9e3a0" opacity=".8"/>
<path d="M0 42l5 23h-5z" fill="#7fba2e"/><rect x="11" y="8.500" width="76" height="1.200" fill="#6a7488"/><g transform="translate(-1.500,-2.500)"><rect x="6" y="20" width="43" height="41" fill="#5a4030"/>
<ellipse cx="27" cy="36" rx="13" ry="11" fill="#d9b48a"/><ellipse cx="34" cy="34" rx="6" ry="6" fill="#e8cda8"/><path d="M6 44l16 17h-16zM22 52l10 9h-14z" fill="#eef0f2"/><path d="M17 26l8-6l2 9zM34 22l8 0l-4 8z" fill="#e0b88c"/></g>
<g fill="#b4b9c0"><rect x="57" y="25" width="40" height="0.900"/><rect x="57" y="29" width="42" height="0.900"/><rect x="57" y="33" width="38" height="0.900"/><rect x="57" y="37" width="41" height="0.900"/><rect x="57" y="41" width="20" height="0.900"/><rect x="57" y="49" width="40" height="0.900"/><rect x="57" y="53" width="30" height="0.900"/></g></svg>
<div class="a t bl" style="left:5.50px;top:230.60px;font-size:6.5px;line-height:7.80px;color:#666;">3</div>
<svg class="a" style="left:13.00px;top:306.80px" width="116.00" height="65.20" viewBox="0 0 116 65" preserveAspectRatio="none"><rect width="116" height="65" fill="#fff"/>
<path d="M89 0h27v65h-30l20-22z" fill="#6fae2f"/><path d="M96 0h20v34z" fill="#4e9228"/><path d="M106 43l10-9v31h-30z" fill="#8dc63f"/><path d="M89 0l17 43l-20 22l14-24z" fill="#c9e3a0" opacity=".8"/>
<path d="M0 42l5 23h-5z" fill="#7fba2e"/><rect x="12" y="8.500" width="66" height="1.200" fill="#6a7488"/><g fill="#b4b9c0"><rect x="67" y="17.500" width="12" height="0.900"/><rect x="67" y="21.500" width="36" height="0.900"/><rect x="67" y="24.500" width="22" height="0.900"/>
<rect x="11" y="24" width="34" height="0.900"/><rect x="11" y="27" width="36" height="0.900"/><rect x="11" y="30" width="22" height="0.900"/><rect x="11" y="35" width="36" height="0.900"/><rect x="11" y="38" width="35" height="0.900"/><rect x="11" y="41" width="14" height="0.900"/><rect x="11" y="46" width="30" height="0.900"/><rect x="11" y="49" width="36" height="0.900"/><rect x="11" y="52" width="28" height="0.900"/><rect x="11" y="55" width="24" height="0.900"/><rect x="11" y="59.500" width="33" height="0.900"/><rect x="11" y="62.500" width="12" height="0.900"/></g></svg>
<div class="a t bl" style="left:5.50px;top:306.60px;font-size:6.5px;line-height:7.80px;color:#666;">4</div>
<svg class="a" style="left:13.00px;top:382.50px" width="116.00" height="65.00" viewBox="0 0 116 65" preserveAspectRatio="none"><rect width="116" height="65" fill="#fff"/>
<path d="M89 0h27v65h-30l20-22z" fill="#6fae2f"/><path d="M96 0h20v34z" fill="#4e9228"/><path d="M106 43l10-9v31h-30z" fill="#8dc63f"/><path d="M89 0l17 43l-20 22l14-24z" fill="#c9e3a0" opacity=".8"/>
<path d="M0 42l5 23h-5z" fill="#7fba2e"/></svg>
<div class="a" style="left:731.50px;top:70.50px;width:8.00px;height:311.00px;background:#f0f0f0"></div>
<div class="a" style="left:732.00px;top:87.00px;width:7.00px;height:8.00px;background:#fff;border:0.600px solid #c8c8c8"></div>
<div class="a t bl" style="left:733.30px;top:72.20px;font-size:5.5px;line-height:6.60px;color:#555;">▴</div>
<div class="a t bl" style="left:733.30px;top:348.70px;font-size:5.5px;line-height:6.60px;color:#555;">▾</div>
<div class="a t bl" style="left:733.00px;top:357.50px;font-size:5px;line-height:6.00px;color:#555;">⇞</div>
<div class="a t bl" style="left:733.00px;top:365.50px;font-size:5px;line-height:6.00px;color:#555;">⇟</div>
<div id="slide" class="a" style="left:173.30px;top:74.70px;width:534.2px;height:300.900px;background:#fff;overflow:hidden">
<svg class="a" style="left:0;top:0" width="534.2" height="300.9" viewBox="0 0 534.2 300.9">
<path d="M409.700 0h124.500v45.500h-109z" fill="#6a9c4e"/><path d="M478.700 0h55.500v45.500h-48z" fill="#86b330"/><path d="M522 0h12.200v45.500h-18.500z" fill="#93c83a"/>
<path d="M419.200 267.600h115v33.300h-142z" fill="#6cab4e"/><path d="M471.700 267.600h62.500v33.300h-79.500z" fill="#86be2c"/><path d="M505 267.600h29.200v33.300h-36z" fill="#8ac42e"/>
<path d="M0 179l19.500 122h-19.500z" fill="#7fba2e"/>
<path d="M329 300.900l46-33.300M392 300.900l27-33.300M409.700 0l15.300 45.500" stroke="#e4e4e4" stroke-width="0.800" fill="none"/>
</svg>
<svg class="a" style="left:223.700px;top:45.500px" width="310.500" height="222" viewBox="0 0 310 222" preserveAspectRatio="none"><use href="#pup"/></svg>
<div class="a t" style="left:34.500px;top:29.300px;font-size:19.300px;line-height:26px;color:#8db82c;letter-spacing:-0.100px">Чому 2 місяці?</div>
<div class="a t sl" style="left:48.500px;top:98.20px">Просвітлилась рогівка</div>
<div class="a" style="left:34.200px;top:100.10px;width:0;height:0;border-left:6px solid #7fba2e;border-top:3.600px solid transparent;border-bottom:3.600px solid transparent"></div>
<div class="a t sl" style="left:48.500px;top:115.80px">Закінчилась дія материнських</div>
<div class="a" style="left:34.200px;top:117.70px;width:0;height:0;border-left:6px solid #7fba2e;border-top:3.600px solid transparent;border-bottom:3.600px solid transparent"></div>
<div class="a t sl" style="left:48.500px;top:128.00px">антитіл</div>
<div class="a t sl" style="left:48.500px;top:145.50px">Цуценяти проявляють характер і</div>
<div class="a" style="left:34.200px;top:147.40px;width:0;height:0;border-left:6px solid #7fba2e;border-top:3.600px solid transparent;border-bottom:3.600px solid transparent"></div>
<div class="a t sl" style="left:48.500px;top:157.50px">індивідуальність</div>
<div class="a t sl" style="left:48.500px;top:174.60px"><u>Можно</u> вже</div>
<div class="a" style="left:34.200px;top:176.50px;width:0;height:0;border-left:6px solid #7fba2e;border-top:3.600px solid transparent;border-bottom:3.600px solid transparent"></div>
<div class="a t sl" style="left:48.500px;top:186.80px">побачити/<u>заподозрити</u> більшість</div>
<div class="a t sl" style="left:48.500px;top:199.00px"><u>хвороб</u></div>
<div class="a t sl" style="left:48.500px;top:216.50px">Можуть без ускладнень зі</div>
<div class="a" style="left:34.200px;top:218.40px;width:0;height:0;border-left:6px solid #7fba2e;border-top:3.600px solid transparent;border-bottom:3.600px solid transparent"></div>
<div class="a t sl" style="left:48.500px;top:228.70px">сторони ШКТ перейти повністю</div>
<div class="a t sl" style="left:48.500px;top:240.80px">на <u>безмолочну</u> годівлю</div>
</div>
<style>#ppt .sl{font-size:10.100px;line-height:12px;color:#484848;letter-spacing:0.020px;-webkit-text-stroke:0.150px #484848}#ppt .sl u{text-decoration:underline;text-decoration-color:#e06060;text-decoration-thickness:0.700px;text-underline-offset:1.200px}</style>
<div class="a" style="left:0.00px;top:377.50px;width:740.00px;height:6.00px;background:#e6e6e6"></div>
<div class="a" style="left:0.00px;top:383.30px;width:740.00px;height:10.00px;background:#f1f1f1;border-top:0.600px solid #d0d0d0"></div>
<div class="a t bl" style="left:2.50px;top:385.59px;font-size:4.85px;line-height:5.82px;color:#555;">Слайд 2 из 34</div>
<svg class="a bl" style="left:43px;top:385px" width="8" height="7" viewBox="0 0 8 7" fill="none" stroke="#666" stroke-width="0.700"><rect x="0.500" y="0.500" width="5" height="6"/><path d="M6.500 2v3"/></svg>
<div class="a t bl" style="left:56.00px;top:385.59px;font-size:4.85px;line-height:5.82px;color:#555;">английский (США)</div>
<svg class="a bl" style="left:506px;top:385px" width="6" height="7" viewBox="0 0 6 7" fill="none" stroke="#777" stroke-width="0.700"><path d="M0.500 6h5M1.500 4.500l1.500-3.500l1.500 3.500z"/></svg>
<div class="a t bl" style="left:514.00px;top:385.59px;font-size:4.85px;line-height:5.82px;color:#555;">Заметки</div>
<svg class="a bl" style="left:540.5px;top:385px" width="6" height="7" viewBox="0 0 6 7"><path d="M0.500 0.500h5v4h-2.500l-1.500 1.500v-1.500h-1z" fill="#555"/></svg>
<div class="a t bl" style="left:548.00px;top:385.59px;font-size:4.85px;line-height:5.82px;color:#555;">Примечания</div>
<div class="a" style="left:585.00px;top:384.00px;width:15.00px;height:9.00px;background:#c8c8c8"></div>
<div class="a" style="left:632.00px;top:384.00px;width:15.00px;height:9.00px;background:#dcdcdc"></div>
<svg class="a bl" style="left:588px;top:385px" width="60" height="7" viewBox="0 0 60 7" fill="none" stroke="#666" stroke-width="0.800"><rect x="1.500" y="1" width="6" height="5"/><rect x="3" y="2.500" width="3" height="2" fill="#888" stroke="none"/><rect x="17" y="1" width="2.500" height="2"/><rect x="20.500" y="1" width="2.500" height="2"/><rect x="17" y="4" width="2.500" height="2"/><rect x="20.500" y="4" width="2.500" height="2"/><path d="M33 1.500h5M33 3.500h5M33 5.500h5" stroke="#555"/><path d="M48 1h7M49 2h5v2.500h-5zM51.500 4.500v1.500"/></svg>
<svg class="a bl" style="left:649px;top:384px" width="91" height="9" viewBox="0 0 91 9" fill="none" stroke="#666" stroke-width="0.800"><path d="M1 4.500h3.500M5.500 4.500h49" stroke-width="0.600"/><path d="M1 4.500h3" stroke-width="1"/><rect x="26" y="1.500" width="1.500" height="6" fill="#555" stroke="none"/><path d="M56 4.500h4M58 2.500v4" stroke-width="1"/><rect x="82" y="2" width="5" height="5"/><path d="M83.500 3.500l2 2M85.500 3.500l-2 2" stroke-width="0.500"/></svg>
<div class="a t bl" style="left:714.50px;top:385.59px;font-size:4.85px;line-height:5.82px;color:#555;">87%</div>
<svg class="a" style="left:647.5px;top:386px" width="7" height="9" viewBox="0 0 7 9"><path d="M0.500 0.500v7l1.800-1.600l1.200 2.600l1-0.500l-1.200-2.500h2.300z" fill="#fff" stroke="#222" stroke-width="0.700"/></svg>
</div>
<div id="div" class="a"></div>
<div id="chat" class="a">

<style>
#chd{left:0;top:0;width:231px;height:27.500px;background:linear-gradient(90deg,#141619,#1d1e21 60%)}
#cht{left:31.5px;top:7px;font-size:8.9px;font-weight:bold;color:#5a9cf2;white-space:nowrap;line-height:12px}
.av{position:absolute;left:9px;width:16px;height:16px;border-radius:7px;color:#fff;font-size:9.8px;line-height:16.5px;text-align:center;letter-spacing:-0.4px}
.nm{position:absolute;left:34px;font-size:8.6px;transform:scaleX(.94);transform-origin:0 0;line-height:10px;color:#4d8fe6;white-space:nowrap}
.nm i{font-style:normal;color:#8b8e93;margin-left:3px}
.bb{position:absolute;left:30px;background:#28292c;border-radius:8px;color:#e9e9e9;font-size:11.1px;line-height:13.7px;padding:0 7px;white-space:nowrap}
.bb span{display:inline-block;transform:scaleX(.915);transform-origin:0 0}
</style>
<div class="a" style="left:0;top:25px;width:231px;height:482px;background:#101215"></div>
<div id="chd" class="a" style="z-index:2"></div>
<svg class="a" style="left:17px;top:6px;z-index:3" width="13" height="13" viewBox="0 0 13 13" fill="none" stroke="#4d8fe6" stroke-width="1.2"><path d="M1 1.5h7v4.5h-4l-2 1.8v-1.8h-1z"/><path d="M5.5 8h2l2.2 2v-2h1.8v-4.5h-1.5"/></svg>
<div id="cht" class="a" style="z-index:3">Науково-практичний скринін...</div>
<div class="a" style="z-index:3;left:185px;top:12px;width:2px;height:2px;border-radius:1px;background:#c9c9c9;box-shadow:3.5px 0 #c9c9c9,7px 0 #c9c9c9"></div>
<svg class="a" style="left:203px;top:8px;z-index:3" width="11" height="11" viewBox="0 0 11 11" fill="none" stroke="#d0d0d0" stroke-width="1.3"><path d="M5 1.2h-2.5a1.5 1.5 0 0 0-1.5 1.5v5.8a1.5 1.5 0 0 0 1.5 1.5h5.8a1.5 1.5 0 0 0 1.5-1.5v-2.5"/><path d="M6.8 0.8h3.4v3.4M10 1l-4.5 4.5"/></svg>
<svg class="a" style="left:222.5px;top:9px;z-index:3" width="8" height="8" viewBox="0 0 8 8" stroke="#d0d0d0" stroke-width="1.2"><path d="M0.5 0.5l7 7M7.5 0.5l-7 7"/></svg>

<div class="av" style="top:19px;background:#e8731f"></div><div class="a" style="left:13.500px;top:22px;width:7px;height:7px;border-radius:4px;border:1.200px solid #f6d9c0"></div>
<div class="bb" style="top:20px;width:80px;height:24px;padding-top:4px;border-radius:0 0 8px 8px"><span>пригничении</span></div>

<div class="nm" style="top:52px">Klishyn Roman<i>17:15</i></div>
<div class="av" style="top:63px;background:#c9382e">KR</div>
<div class="bb" style="top:63px;width:166px;height:39px;padding-top:6px"><span>Складки на мордочці, може<br>бути грибок та інше між ними</span></div>
<div class="bb" style="top:104px;width:43px;height:25.5px;padding-top:6px"><span>Вуха?</span></div>

<div class="nm" style="top:137.5px">Hanna<i>17:15</i></div>
<div class="av" style="top:149px;background:#e8731f">H</div>
<div class="bb" style="top:148px;width:131px;height:26px;padding-top:6px"><span>Я б йому кігті підстригла</span></div>

<div class="nm" style="top:182px">Егорка Златов<i>17:15</i></div>
<div class="av" style="top:193px;background:#f0622a">E</div>
<div class="bb" style="top:193px;width:46.5px;height:25.5px;padding-top:6px"><span>Лапки</span></div>

<div class="nm" style="top:226px">Alex Kinol<i>17:15</i></div>
<div class="av" style="top:237.5px;background:#c9382e">AK</div>
<div class="bb" style="top:237px;width:89px;height:25px;padding-top:6px"><span>В різні сторони</span></div>

<div class="nm" style="top:270px">Uliana Bura<i>17:16</i></div>
<div class="av" style="top:282px;background:#3d4c5f">UB</div>
<div class="bb" style="top:281.5px;width:31.5px;height:25.5px;padding-top:6px"><span>очі</span></div>

<div class="nm" style="top:314.5px">Belimova Anastasiia<i>17:17</i></div>
<div class="av" style="top:326.5px;background:#f5a31f;border-radius:8px">BA</div>
<svg class="a" style="left:29px;top:325.500px;border-radius:7px" width="97" height="64" viewBox="29 -2 282 186" preserveAspectRatio="xMidYMid slice"><use href="#pup"/></svg>

<svg class="a" style="left:33px;top:397px" width="50" height="12" viewBox="0 0 50 12" fill="none" stroke="#8f9297" stroke-width="1"><path d="M1 2.5h8v5h-5l-2 2v-2h-1z"/><path d="M10.5 0.5v3M9 2h3"/><circle cx="23" cy="6" r="4.2"/><path d="M21 7.2q2 1.8 4 0"/><path d="M27.5 0.5v3M26 2h3"/><circle cx="36.500" cy="6" r="0.500" fill="#8f9297"/><circle cx="39.500" cy="6" r="0.500" fill="#8f9297"/><circle cx="42.500" cy="6" r="0.500" fill="#8f9297"/></svg>

<div class="a" style="left:0;top:412px;width:231px;height:15.5px;background:#202225"></div>
<svg class="a" style="left:6px;top:414px" width="13" height="12" viewBox="0 0 13 12" fill="none" stroke="#b4b7bc" stroke-width="1.1"><circle cx="5" cy="3.2" r="2.2"/><path d="M1 10.500c0-3 2-4 4-4"/><path d="M9 5.500l3 1v2.200c0 1.500-1.500 2.500-3 3c-1.500-0.500-3-1.500-3-3v-2.200z" fill="#4d8fe6" stroke="#4d8fe6" stroke-width="0.500"/></svg>
<div class="a" style="left:22px;top:414.5px;font-size:8.7px;line-height:11px;color:#b1b4b9;white-space:nowrap;transform:scaleX(.935);transform-origin:0 0">Кто может видеть ваши сообщения? Запись включена</div>

<div class="a" style="left:8.500px;top:440.500px;font-size:8.6px;line-height:11px;color:#e6e6e6;transform:scaleX(.91);transform-origin:0 0">Кому:</div>
<div class="a" style="left:35.500px;top:438px;width:118.500px;height:15.5px;border-radius:4px;background:#0e6fe8;color:#fff;"></div><div class="a" style="left:40.5px;top:438px;color:#fff;font-size:8px;line-height:15.5px;white-space:nowrap;transform:scaleX(.945);transform-origin:0 0">Групповой чат конференции</div>
<svg class="a" style="left:142px;top:443.500px" width="7" height="5" viewBox="0 0 7 5" fill="none" stroke="#fff" stroke-width="1.300"><path d="M0.800 0.800l2.700 2.700l2.700-2.700"/></svg>
<div class="a" style="left:6px;top:457.500px;font-size:11px;line-height:13.600px;color:#7f8287;white-space:nowrap;transform:scaleX(.939);transform-origin:0 0">Сообщение Науково-практичний скринінг для<br>власників 2-х місячних цуценят</div>

<svg class="a" style="left:9px;top:490px" width="120" height="13" viewBox="0 0 120 13" fill="none" stroke="#888b90" stroke-width="1.050"><path d="M2.300 3.600v-1.300h6.400v1.300M5.500 2.300v8.200M4.200 10.500h2.600"/><circle cx="27.500" cy="6.500" r="4.500"/><circle cx="25.900" cy="5.500" r="0.400" fill="#888b90"/><circle cx="29.100" cy="5.500" r="0.400" fill="#888b90"/><path d="M25.500 7.700q2 1.600 4 0"/><path d="M69 2h3.800l2.700 2.700v6.300h-6.500z"/><path d="M72.500 2v3h3"/><path d="M97.500 6.500v-2.500a1.500 1.500 0 0 0-1.500-1.500h-4.500a1.500 1.500 0 0 0-1.500 1.500v4.500a1.500 1.500 0 0 0 1.500 1.500h3"/><circle cx="97.300" cy="10.200" r="0.900" fill="#888b90" stroke="none"/><path d="M108.800 5.700l2.100 2.100l2.100-2.100" stroke-width="1.200"/></svg>
<div class="a" style="left:53px;top:492px;font-size:7.500px;line-height:9px;font-weight:bold;color:#9da0a5;letter-spacing:0.200px">GIF</div>
<div class="a" style="left:213.500px;top:489px;width:18px;height:15.5px;border-radius:4px;background:#2b2d30"></div>
<svg class="a" style="left:218px;top:492.500px" width="10" height="9" viewBox="0 0 10 9"><path d="M0.500 0.500h9l-4 8l-1.200-3.800z" fill="#8e9196"/><path d="M9.500 0.500l-5.200 4.200" stroke="#2b2d30" stroke-width="0.800"/></svg>
<div class="a" style="left:0;top:507px;width:231px;height:4px;background:#0a0b0c"></div>
<div class="a" style="left:228px;top:28px;width:3px;height:283px;background:#f4f4f4;border-radius:1.500px 0 0 0"></div><div class="a" style="left:228px;top:311px;width:3px;height:100px;background:#b2b5ba"></div>

</div>
</body></html>
